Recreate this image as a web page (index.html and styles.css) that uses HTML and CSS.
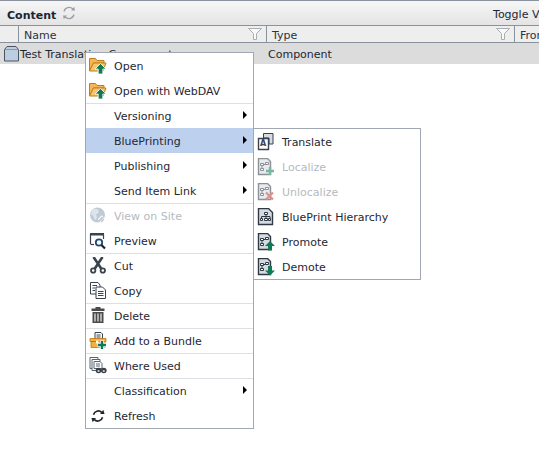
FILE: index.html
```html
<!DOCTYPE html>
<html lang="en">
<head>
<meta charset="utf-8">
<title>Content</title>
<link rel="stylesheet" href="styles.css">
</head>
<body>
<svg class="defs" width="0" height="0" aria-hidden="true">
  <symbol id="i-open" viewBox="0 0 18 18">
    <path d="M.5 14V1.500h6l1.500 2h7V6H4.500L.5 14z" fill="#f5b756" stroke="#c07f1c"/>
    <path d="M.5 14l4-8H17l-3 8z" fill="#f8c46c" stroke="#c07f1c"/>
    <path d="M11.500 6.500l5.500 5.500h-3.200v5H9.200v-5H6z" fill="#0f7a55" stroke="#fff" stroke-width=".8"/>
  </symbol>
  <symbol id="i-globe" viewBox="0 0 18 18">
    <circle cx="8.500" cy="8" r="7.500" fill="#8ba0b5"/>
    <path d="M5 1.500l4 1 1 3-3 2 1 3-2 3-2-5-2-1 1-4z" fill="#c3cfda"/>
    <path d="M9.500 13l4-4M11 16l5-5" stroke="#fff" stroke-width="2.400"/>
    <path d="M10 13.500l3.500-3.500M12 15l3-3" stroke="#8896a5" stroke-width="1.300"/>
  </symbol>
  <symbol id="i-preview" viewBox="0 0 18 18">
    <path d="M1.500 12V2.500h13V7" fill="none" stroke="#39424e" stroke-width="1.200"/>
    <path d="M1 1h14v2.500H1z" fill="#39424e"/>
    <path d="M1.500 12.500H5" stroke="#39424e" stroke-width="1.200"/>
    <circle cx="10" cy="10.500" r="3.200" fill="#fff" stroke="#1d4a72" stroke-width="1.800"/>
    <path d="M12.500 13l3.500 3.500" stroke="#1c2128" stroke-width="2.200"/>
  </symbol>
  <symbol id="i-cut" viewBox="0 0 18 18">
    <path d="M4.500 0l8 12M13.500 0l-8 12" stroke="#3a434d" stroke-width="2.600" fill="none"/>
    <circle cx="4.200" cy="13.500" r="2.200" fill="#fff" stroke="#3a434d" stroke-width="1.800"/>
    <circle cx="13.800" cy="13.500" r="2.200" fill="#fff" stroke="#3a434d" stroke-width="1.800"/>
  </symbol>
  <symbol id="i-copy" viewBox="0 0 18 18">
    <path d="M1.500 .5H9L11 3v9H1.500z" fill="#fff" stroke="#39424e"/>
    <path d="M3.500 3.500H8M3.500 6H6M3.500 8.500H6" stroke="#39424e"/>
    <path d="M7 5h6.500l3 3v8.500H7z" fill="#fff" stroke="#39424e"/>
    <path d="M9 9.500h5.500M9 11.500h5.500M9 13.500h5.500" stroke="#39424e"/>
  </symbol>
  <symbol id="i-trash" viewBox="0 0 18 18">
    <path d="M6.500 0h5v1.500h-5zM2.500 1.500h13V4h-13z" fill="#4b4b4b"/>
    <path d="M3.500 5h11v11h-11z" fill="#4b4b4b"/>
    <path d="M6 6.500v8M9 6.500v8M12 6.500v8" stroke="#fff" stroke-width="1.100"/>
  </symbol>
  <symbol id="i-bundle" viewBox="0 0 18 18">
    <path d="M6 .5h6l1.500 1.500v6H6z" fill="#fff" stroke="#39424e"/>
    <path d="M7.500 3h4M7.500 5h4" stroke="#39424e"/>
    <path d="M1 6.500h16v3H1zM2 9.500h14v6H2z" fill="#f4b13f" stroke="#b57612" stroke-width=".8"/>
    <path d="M7 8.500h2.500v3H7z" fill="#fff"/>
    <path d="M13 8.500v9M8.500 13h9" stroke="#fff" stroke-width="4.400"/>
    <path d="M13 9v8M9 13h8" stroke="#0f7a55" stroke-width="2.400"/>
  </symbol>
  <symbol id="i-where" viewBox="0 0 18 18">
    <path d="M1 .5h8v11H1z" fill="#fff" stroke="#5a6672"/>
    <path d="M3 2.500h8v11H3z" fill="#fff" stroke="#5a6672"/>
    <path d="M5 4.500h6l2 2v5H5z" fill="#fff" stroke="#5a6672"/>
    <path d="M7 7h4M7 9h4" stroke="#5a6672"/>
    <circle cx="9.500" cy="13.500" r="2.800" fill="#3a3f46"/>
    <circle cx="14.800" cy="13.500" r="2.800" fill="#3a3f46"/>
    <circle cx="9.500" cy="14" r="1.100" fill="#cfd6dd"/>
    <circle cx="14.800" cy="14" r="1.100" fill="#cfd6dd"/>
  </symbol>
  <symbol id="i-refresh" viewBox="-2 -2 22 22">
    <path d="M3.500 7.500A6 6 0 0 1 13.500 4.500" fill="none" stroke="#1f252c" stroke-width="2"/>
    <path d="M11.500 6.500h5.500L15.500 1.500z" fill="#1f252c"/>
    <path d="M14.500 10.500A6 6 0 0 1 4.500 13.500" fill="none" stroke="#1f252c" stroke-width="2"/>
    <path d="M6.500 11.500H1l1.500 5z" fill="#1f252c"/>
  </symbol>
  <symbol id="i-translate" viewBox="0 0 18 18">
    <path d="M6.500 .5h9.500V11H12V5H6.500z" fill="#d5dbe3" stroke="#39424e"/>
    <path d="M1.500 5.500H11.500V16.500H1.500z" fill="#fff" stroke="#39424e" stroke-width="1.400"/>
  </symbol>
  <symbol id="i-doc" viewBox="0 0 18 18">
    <path d="M1.500 .5h10l4 4v12h-14z" fill="#d5dbe3" stroke="#2f3843" stroke-width="1.400"/>
    <path d="M7.500 4.500h3v2h-3zM3.500 10.500h2v2h-2zM7.500 10.500h3v2h-3zM11.500 10.500h2v2h-2z" fill="#fff" stroke="#2f3843"/>
    <path d="M9 6.500v4M4.500 10.500v-2h8.500v2" fill="none" stroke="#2f3843"/>
  </symbol>
  <symbol id="i-doc-s" viewBox="0 0 18 18">
    <path d="M1.500 .5h9l3 3V16.500h-12z" fill="#d5dbe3" stroke="#2f3843" stroke-width="1.400"/>
    <path d="M3.500 5.500h3v2h-3zM8.500 4.500h3v2h-3zM3.500 10.500h3v2h-3z" fill="#fff" stroke="#2f3843"/>
    <path d="M5 7.500v3M6.500 6.500h2" stroke="#2f3843"/>
  </symbol>
</svg>

<header class="titlebar">
  <span class="title">Content</span>
  <svg class="title-refresh" viewBox="0 0 14 14"><path d="M2 5.500A5.200 5.200 0 0 1 10.800 3M12 8.500A5.200 5.200 0 0 1 3.200 11" fill="none" stroke="#9aa0a6" stroke-width="1.300"/><path d="M9 4.500h4L12.200 .8zM5 9.500H1L1.800 13.200z" fill="#9aa0a6"/></svg>
  <span class="toggle">Toggle View</span>
</header>

<div class="columns">
  <div class="col col-check"></div>
  <div class="col col-name"><span>Name</span><svg class="filter" viewBox="0 0 14 12"><path d="M.5.500h13L8.500 5.500V11.500h-3V5.500z" fill="#fafafa" stroke="#a9aeb3"/></svg></div>
  <div class="col col-type"><span>Type</span><svg class="filter" viewBox="0 0 14 12"><path d="M.5.500h13L8.500 5.500V11.500h-3V5.500z" fill="#fafafa" stroke="#a9aeb3"/></svg></div>
  <div class="col col-from"><span>From</span></div>
</div>

<div class="row">
  <div class="cell-name">
    <svg class="row-icon" viewBox="0 0 16 16"><path d="M.5 3.500 3 .5h9l2.500 3v11.500H.5z" fill="#bccde2" stroke="#4a5460"/><path d="M.5 3.500h14" stroke="#8a97a6"/></svg>
    <span>Test Translation Component</span>
  </div>
  <div class="cell-type">Component</div>
</div>

<nav class="menu menu-main">
  <div class="item"><svg class="ico"><use href="#i-open"/></svg><span>Open</span></div>
  <div class="item sep"><svg class="ico"><use href="#i-open"/></svg><span>Open with WebDAV</span></div>
  <div class="item arrow"><span>Versioning</span></div>
  <div class="item arrow active"><span>BluePrinting</span></div>
  <div class="item arrow"><span>Publishing</span></div>
  <div class="item arrow sep"><span>Send Item Link</span></div>
  <div class="item disabled"><svg class="ico"><use href="#i-globe"/></svg><span>View on Site</span></div>
  <div class="item sep"><svg class="ico"><use href="#i-preview"/></svg><span>Preview</span></div>
  <div class="item"><svg class="ico"><use href="#i-cut"/></svg><span>Cut</span></div>
  <div class="item sep"><svg class="ico"><use href="#i-copy"/></svg><span>Copy</span></div>
  <div class="item sep"><svg class="ico"><use href="#i-trash"/></svg><span>Delete</span></div>
  <div class="item sep"><svg class="ico"><use href="#i-bundle"/></svg><span>Add to a Bundle</span></div>
  <div class="item sep"><svg class="ico"><use href="#i-where"/></svg><span>Where Used</span></div>
  <div class="item arrow"><span>Classification</span></div>
  <div class="item"><svg class="ico"><use href="#i-refresh"/></svg><span>Refresh</span></div>
</nav>

<nav class="menu menu-sub">
  <div class="item"><svg class="ico"><use href="#i-translate"/></svg><b class="ico-letter">A</b><span>Translate</span></div>
  <div class="item disabled"><svg class="ico"><use href="#i-doc-s"/><path d="M13 9v8M9 13h8" stroke="#0f7a55" stroke-width="2.400"/></svg><span>Localize</span></div>
  <div class="item disabled"><svg class="ico"><use href="#i-doc-s"/><path d="M9 9.500l7 7M16 9.500l-7 7" stroke="#c0392b" stroke-width="2.200"/></svg><span>Unlocalize</span></div>
  <div class="item"><svg class="ico"><use href="#i-doc"/></svg><span>BluePrint Hierarchy</span></div>
  <div class="item"><svg class="ico"><use href="#i-doc-s"/><path d="M13 8l5 5h-3v4.500h-4V13H8z" fill="#0f7a55"/></svg><span>Promote</span></div>
  <div class="item"><svg class="ico"><use href="#i-doc-s"/><path d="M13 17.500l5-5h-3V8h-4v4.500H8z" fill="#0f7a55"/></svg><span>Demote</span></div>
</nav>
</body>
</html>
```
FILE: styles.css
```css
* { box-sizing: border-box; }
html, body { margin: 0; padding: 0; height: 100%; overflow: hidden; background: #fff; }
body {
  font-family: "DejaVu Sans", Verdana, sans-serif;
  font-size: 11px;
  color: #1f2733;
  position: relative;
}
.defs { position: absolute; }

.titlebar {
  height: 25px;
  border-top: 1px solid #8a939d;
  background: linear-gradient(#f6f6f6, #e4e4e4);
  display: flex;
  align-items: center;
  padding: 2px 0 0 7px;
  white-space: nowrap;
}
.title { font-weight: bold; color: #1c2533; padding-top: 2px; }
.title-refresh { width: 14px; height: 14px; margin: 0 0 3px 6px; }
.toggle { margin-left: auto; margin-right: -19px; }

.columns {
  height: 18px;
  border-top: 1px solid #8a939d;
  border-bottom: 1px solid #8a939d;
  background: #eeeeee;
  display: flex;
  color: #2a3340;
}
.col { height: 100%; display: flex; align-items: center; justify-content: space-between; padding: 0 4px 0 5px; border-right: 1px solid #8a939d; overflow: hidden; white-space: nowrap; }
.col span { padding-top: 2px; }
.col-check { width: 19px; }
.col-name { width: 248px; }
.col-type { width: 248px; }
.col-from { flex: 1; border-right: 0; }
.filter { width: 14px; height: 12px; flex: none; }

.row {
  height: 21px;
  background: #dcdcdc;
  display: flex;
  align-items: center;
  white-space: nowrap;
  padding-top: 2px;
}
.cell-name { width: 268px; display: flex; align-items: center; padding-left: 4px; }
.row-icon { width: 16px; height: 16px; flex: none; margin-top: -1px; }

.menu {
  position: absolute;
  background: #fff;
  border: 1px solid #a0a9b3;
  z-index: 2;
}
.menu-main { left: 85px; top: 52px; width: 169px; }
.menu-sub { left: 253px; top: 128px; width: 168px; z-index: 3; }
.item {
  height: 25px;
  display: flex;
  align-items: center;
  padding: 2px 0 0 28px;
  position: relative;
  white-space: nowrap;
}
.ico { position: absolute; left: 3px; top: 4px; width: 18px; height: 18px; overflow: visible; }
.ico-letter {
  position: absolute;
  left: 6px;
  top: 10px;
  font-size: 8px;
  line-height: 10px;
  color: #39424e;
}
.sep::before {
  content: "";
  position: absolute;
  left: 0;
  right: 0;
  bottom: -1px;
  height: 1px;
  background: #dcdfe3;
  z-index: 1;
}
.active { background: #bdd0ee; }
.disabled { color: #b5bac0; }
.disabled .ico { opacity: .55; }
.arrow::after {
  content: "";
  position: absolute;
  right: 6px;
  top: 8px;
  border-left: 4px solid #000;
  border-top: 4px solid transparent;
  border-bottom: 4px solid transparent;
}
```
